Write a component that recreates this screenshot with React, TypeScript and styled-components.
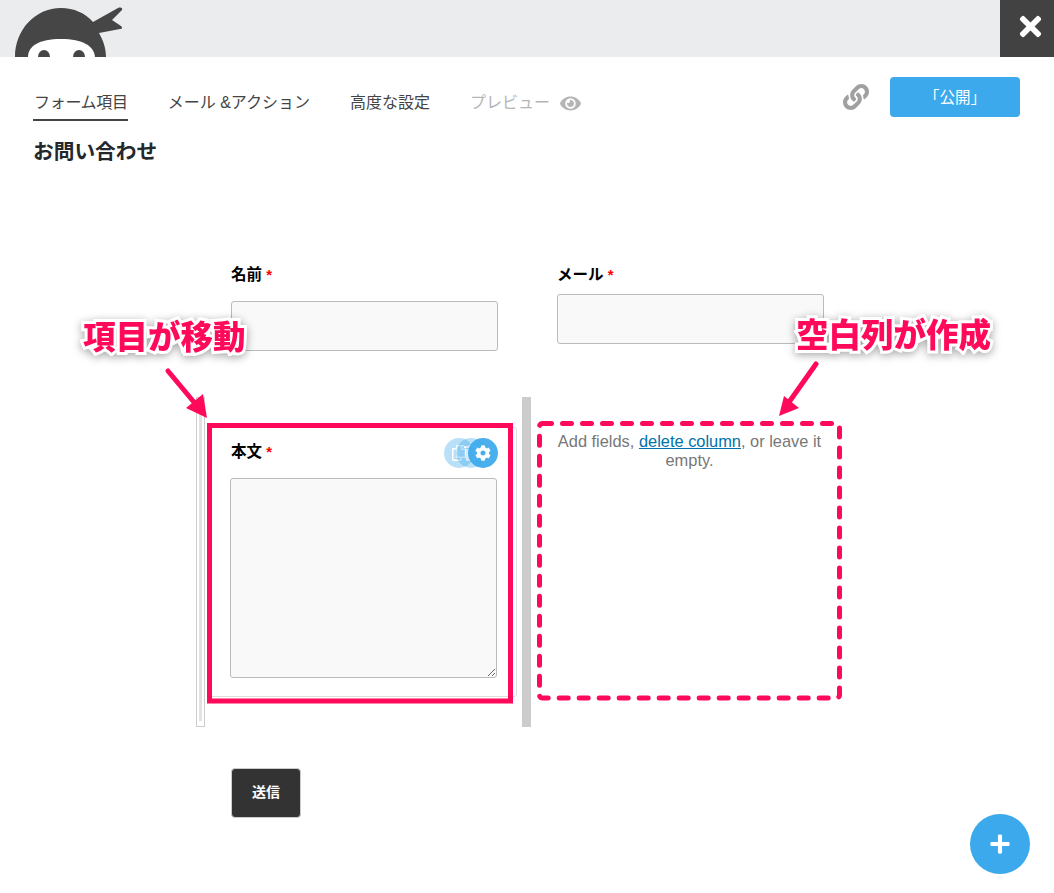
import React from 'react';
import styled, { createGlobalStyle } from 'styled-components';
import { FaCog, FaEye, FaLink, FaPlus, FaTimes, FaRegCopy, FaTrash } from 'react-icons/fa';

const BLUE = '#3ba9ec';
const PINK = '#ff0a5a';

const GlobalStyle = createGlobalStyle`
  html, body {
    margin: 0;
    background: #fff;
    font-family: "Liberation Sans", "Noto Sans CJK JP", sans-serif;
  }
`;

const Page = styled.div`
  position: relative;
  width: 1054px;
  height: 893px;
  overflow: hidden;
  background: #fff;
`;

const TopBar = styled.header`
  display: flex;
  justify-content: space-between;
  height: 57px;
  background: #ebecee;
`;

const Logo = styled.svg`
  display: block;
  width: 130px;
  height: 57px;
`;

const CloseButton = styled.button`
  display: flex;
  align-items: center;
  justify-content: center;
  width: 54px;
  height: 57px;
  padding: 0 0 4px 6px;
  border: none;
  background: #424242;
  color: #fff;
  font-size: 31px;
`;

const Nav = styled.nav`
  display: flex;
  align-items: flex-start;
  gap: 39px;
  padding: 20px 34px 0 33px;
`;

const Tab = styled.a<{ $active?: boolean; $muted?: boolean }>`
  display: flex;
  align-items: center;
  gap: 10px;
  box-sizing: border-box;
  height: 44px;
  padding: 10px 0 0 1px;
  border-bottom: 2px solid ${p => (p.$active ? '#444' : 'transparent')};
  color: ${p => (p.$muted ? '#b5b5b5' : '#444')};
  font-size: 16px;
  letter-spacing: ${p => (p.$active ? '-0.3px' : '0')};
  line-height: 22px;
  white-space: nowrap;
`;

const NavEnd = styled.div`
  display: flex;
  align-items: center;
  gap: 21px;
  margin-left: auto;
  color: #a0a0a0;
  font-size: 26px;
`;

const PublishButton = styled.button`
  width: 130px;
  height: 40px;
  padding: 0 0 3px;
  border: none;
  border-radius: 4px;
  background: ${BLUE};
  color: #fff;
  font-family: inherit;
  font-size: 15.5px;
`;

const Title = styled.h1`
  margin: 19px 0 0 33px;
  color: #23282d;
  font-size: 20.7px;
  font-weight: 700;
  line-height: 24px;
`;

const Form = styled.form`
  margin: 101px 0 0 196px;
`;

const TopRow = styled.div`
  display: flex;
  gap: 59px;
  height: 132px;
  padding-left: 35px;
`;

const Column = styled.div`
  width: 267px;
`;

const FieldLabel = styled.label`
  display: block;
  color: #000;
  font-size: 15.5px;
  font-weight: 700;
  line-height: 20px;
`;

const CardLabel = styled(FieldLabel)`
  margin-left: 1px;
`;

const Required = styled.span`
  color: #f00;
  font-size: 15px;
`;

const TextInput = styled.input<{ $gap: number }>`
  display: block;
  box-sizing: border-box;
  width: 267px;
  height: 50px;
  margin-top: ${p => p.$gap}px;
  border: 1px solid #bbb;
  border-radius: 3px;
  background: #f9f9f9;
`;

const BottomRow = styled.div`
  display: flex;
  height: 330px;
`;

const SlimColumn = styled.div`
  box-sizing: border-box;
  width: 9px;
  padding: 4px 2px 5px;
  border: 1px solid #ccc;
`;

const SlimBar = styled.div`
  height: 100%;
  background: #e2e2e2;
`;

const FieldCard = styled.div`
  position: relative;
  box-sizing: border-box;
  width: 309px;
  height: 270px;
  margin: 30px 0 0 3px;
  padding: 14px 0 0 21px;
  border: 1px solid #ddd;
  border-radius: 3px;
`;

const MessageBox = styled.textarea`
  display: block;
  box-sizing: border-box;
  width: 267px;
  height: 200px;
  margin-top: 16px;
  border: 1px solid #bbb;
  border-radius: 3px;
  background: #f9f9f9;
`;

const ActionDot = styled.span<{ $left: number; $opacity: number }>`
  position: absolute;
  top: 10px;
  left: ${p => p.$left}px;
  display: flex;
  align-items: center;
  justify-content: center;
  width: 30px;
  height: 30px;
  border-radius: 50%;
  background: ${BLUE};
  color: #fff;
  font-size: 16px;
  opacity: ${p => p.$opacity};
`;

const Divider = styled.div`
  width: 9px;
  margin-left: 5px;
  background: #ccc;
`;

const EmptyColumn = styled.div`
  box-sizing: border-box;
  width: 305px;
  margin-left: 6px;
  padding: 35px 20px 0;
  color: #777;
  font-size: 16.4px;
  line-height: 18.5px;
  text-align: center;
`;

const DeleteLink = styled.a`
  color: #0073aa;
  text-decoration: underline;
`;

const SubmitButton = styled.button`
  display: block;
  width: 70px;
  height: 50px;
  margin: 41px 0 0 35px;
  padding: 0 0 4px;
  border: 1px solid #ccc;
  border-radius: 4px;
  background: #333;
  color: #fff;
  font-family: inherit;
  font-size: 14px;
  font-weight: 700;
`;

const AddButton = styled.button`
  position: absolute;
  left: 970px;
  top: 814px;
  display: flex;
  align-items: center;
  justify-content: center;
  width: 60px;
  height: 60px;
  padding: 0;
  border: none;
  border-radius: 50%;
  background: ${BLUE};
  color: #fff;
  font-size: 22px;
`;

const Callout = styled.div<{ $left: number; $top: number }>`
  position: absolute;
  left: ${p => p.$left}px;
  top: ${p => p.$top}px;
  color: ${PINK};
  font-size: 32.5px;
  font-weight: 900;
  line-height: 40px;
  white-space: nowrap;
  -webkit-text-stroke: 6px #fff;
  paint-order: stroke fill;
  filter: drop-shadow(0 2px 4px rgba(0, 0, 0, 0.35));
`;

const Overlay = styled.svg`
  position: absolute;
  left: 0;
  top: 0;
  width: 1054px;
  height: 893px;
  pointer-events: none;
`;

const App = () => (
  <Page>
    <GlobalStyle />
    <TopBar>
      <Logo viewBox="0 0 130 57">
        <path d="M15 57C15 30 35 8 61 8c13 0 24 5 32 14L118 8c3-1 5 0 4 2l-10 10 9 6c2 2 1 3-1 3l-21 4c4 7 7 15 7 24z" fill="#454645" />
        <path d="M28 57c0-11 11-18 33-18s33 7 34 18z" fill="#fff" />
        <ellipse cx="44" cy="57" rx="6" ry="7" fill="#454645" />
        <ellipse cx="79" cy="57" rx="6" ry="7" fill="#454645" />
      </Logo>
      <CloseButton><FaTimes /></CloseButton>
    </TopBar>

    <Nav>
      <Tab $active>フォーム項目</Tab>
      <Tab>メール &amp;アクション</Tab>
      <Tab>高度な設定</Tab>
      <Tab $muted>プレビュー <FaEye size={21} /></Tab>
      <NavEnd>
        <FaLink />
        <PublishButton>「公開」</PublishButton>
      </NavEnd>
    </Nav>

    <Title>お問い合わせ</Title>

    <Form>
      <TopRow>
        <Column>
          <FieldLabel>名前 <Required>*</Required></FieldLabel>
          <TextInput $gap={16} />
        </Column>
        <Column>
          <FieldLabel>メール <Required>*</Required></FieldLabel>
          <TextInput $gap={9} />
        </Column>
      </TopRow>

      <BottomRow>
        <SlimColumn><SlimBar /></SlimColumn>
        <FieldCard>
          <CardLabel>本文 <Required>*</Required></CardLabel>
          <MessageBox />
          <ActionDot $left={235} $opacity={0.35}><FaRegCopy /></ActionDot>
          <ActionDot $left={247} $opacity={0.35}><FaTrash /></ActionDot>
          <ActionDot $left={259} $opacity={0.92}><FaCog /></ActionDot>
        </FieldCard>
        <Divider />
        <EmptyColumn>
          Add fields, <DeleteLink>delete column</DeleteLink>, or leave it empty.
        </EmptyColumn>
      </BottomRow>

      <SubmitButton type="button">送信</SubmitButton>
    </Form>

    <AddButton><FaPlus /></AddButton>

    <Overlay viewBox="0 0 1054 893">
      <rect x="209.5" y="425.5" width="301" height="275.5" fill="none" stroke={PINK} strokeWidth="5" />
      <rect x="539.5" y="423.5" width="300" height="274.5" rx="3" fill="none" stroke={PINK} strokeWidth="5" strokeDasharray="9 11" strokeLinecap="round" />
      <path d="M168 371l30 36" stroke={PINK} strokeWidth="5" strokeLinecap="round" fill="none" />
      <path d="M207 418l-4-24-17 14z" fill={PINK} />
      <path d="M816 364l-29 41" stroke={PINK} strokeWidth="5" strokeLinecap="round" fill="none" />
      <path d="M779 416l20-8-15-12z" fill={PINK} />
    </Overlay>

    <Callout $left={83} $top={318}>項目が移動</Callout>
    <Callout $left={796} $top={316}>空白列が作成</Callout>
  </Page>
);

export default App;
